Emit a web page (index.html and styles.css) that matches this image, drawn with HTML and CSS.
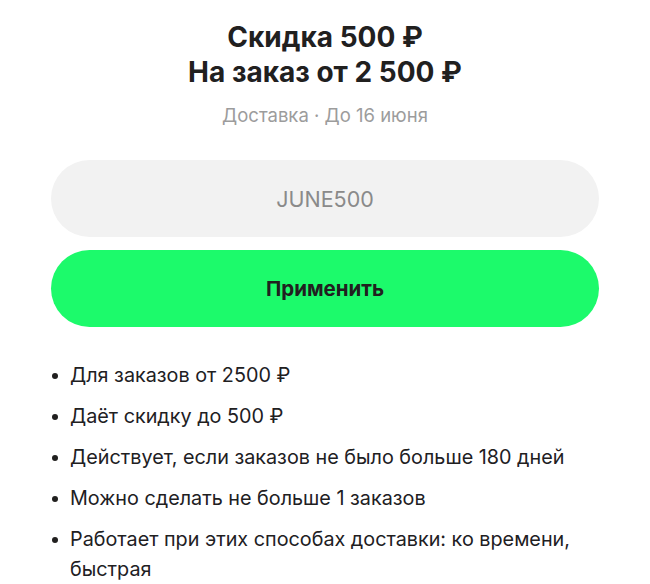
FILE: index.html
```html
<!DOCTYPE html>
<html lang="ru">
<head>
<meta charset="utf-8">
<link rel="stylesheet" href="styles.css">
</head>
<body>
<div class="page">
  <div class="head">
    <h1 class="title">Скидка 500 ₽<br>На заказ от 2 500 ₽</h1>
    <div class="sub">Доставка · До 16 июня</div>
  </div>
  <div class="code">JUNE500</div>
  <button class="apply">Применить</button>
  <ul class="rules">
    <li>Для заказов от 2500 ₽</li>
    <li>Даёт скидку до 500 ₽</li>
    <li>Действует, если заказов не было больше 180 дней</li>
    <li>Можно сделать не больше 1 заказов</li>
    <li>Работает при этих способах доставки: ко времени, быстрая</li>
  </ul>
</div>
</body>
</html>
```

FILE: styles.css
```css
* { box-sizing: border-box; }
html, body { margin: 0; padding: 0; background: #fff; }
body { font-family: Inter, "Noto Sans", sans-serif; color: #21201f; }
.page { width: 650px; padding: 20px 51px 0 51px; display: flex; flex-direction: column; }
.head { display: flex; flex-direction: column; align-items: center; }
.title { margin: 0; font-size: 28px; line-height: 35px; font-weight: 700; text-align: center; }
.sub { margin-top: 13px; font-size: 18.5px; line-height: 24px; color: #9c9c9c; }
.code { margin-top: 33px; height: 77px; border-radius: 39px; background: #f2f2f2; display: flex; align-items: center; justify-content: center; font-size: 21.5px; color: #8a8a8a; }
.apply { margin-top: 13px; height: 77px; border: 0; border-radius: 39px; background: #1cfa6b; font-family: inherit; font-size: 20.5px; font-weight: 700; color: #21201f; }
.rules { margin: 33px 0 0 0; padding: 0; list-style: none; font-size: 19.8px; line-height: 30px; }
.rules li { display: flex; align-items: flex-start; gap: 12px; margin-bottom: 11px; }
.rules li::before { content: ""; flex: none; width: 6px; height: 6px; border-radius: 50%; background: #21201f; margin: 13px 0 0 1px; }
```
